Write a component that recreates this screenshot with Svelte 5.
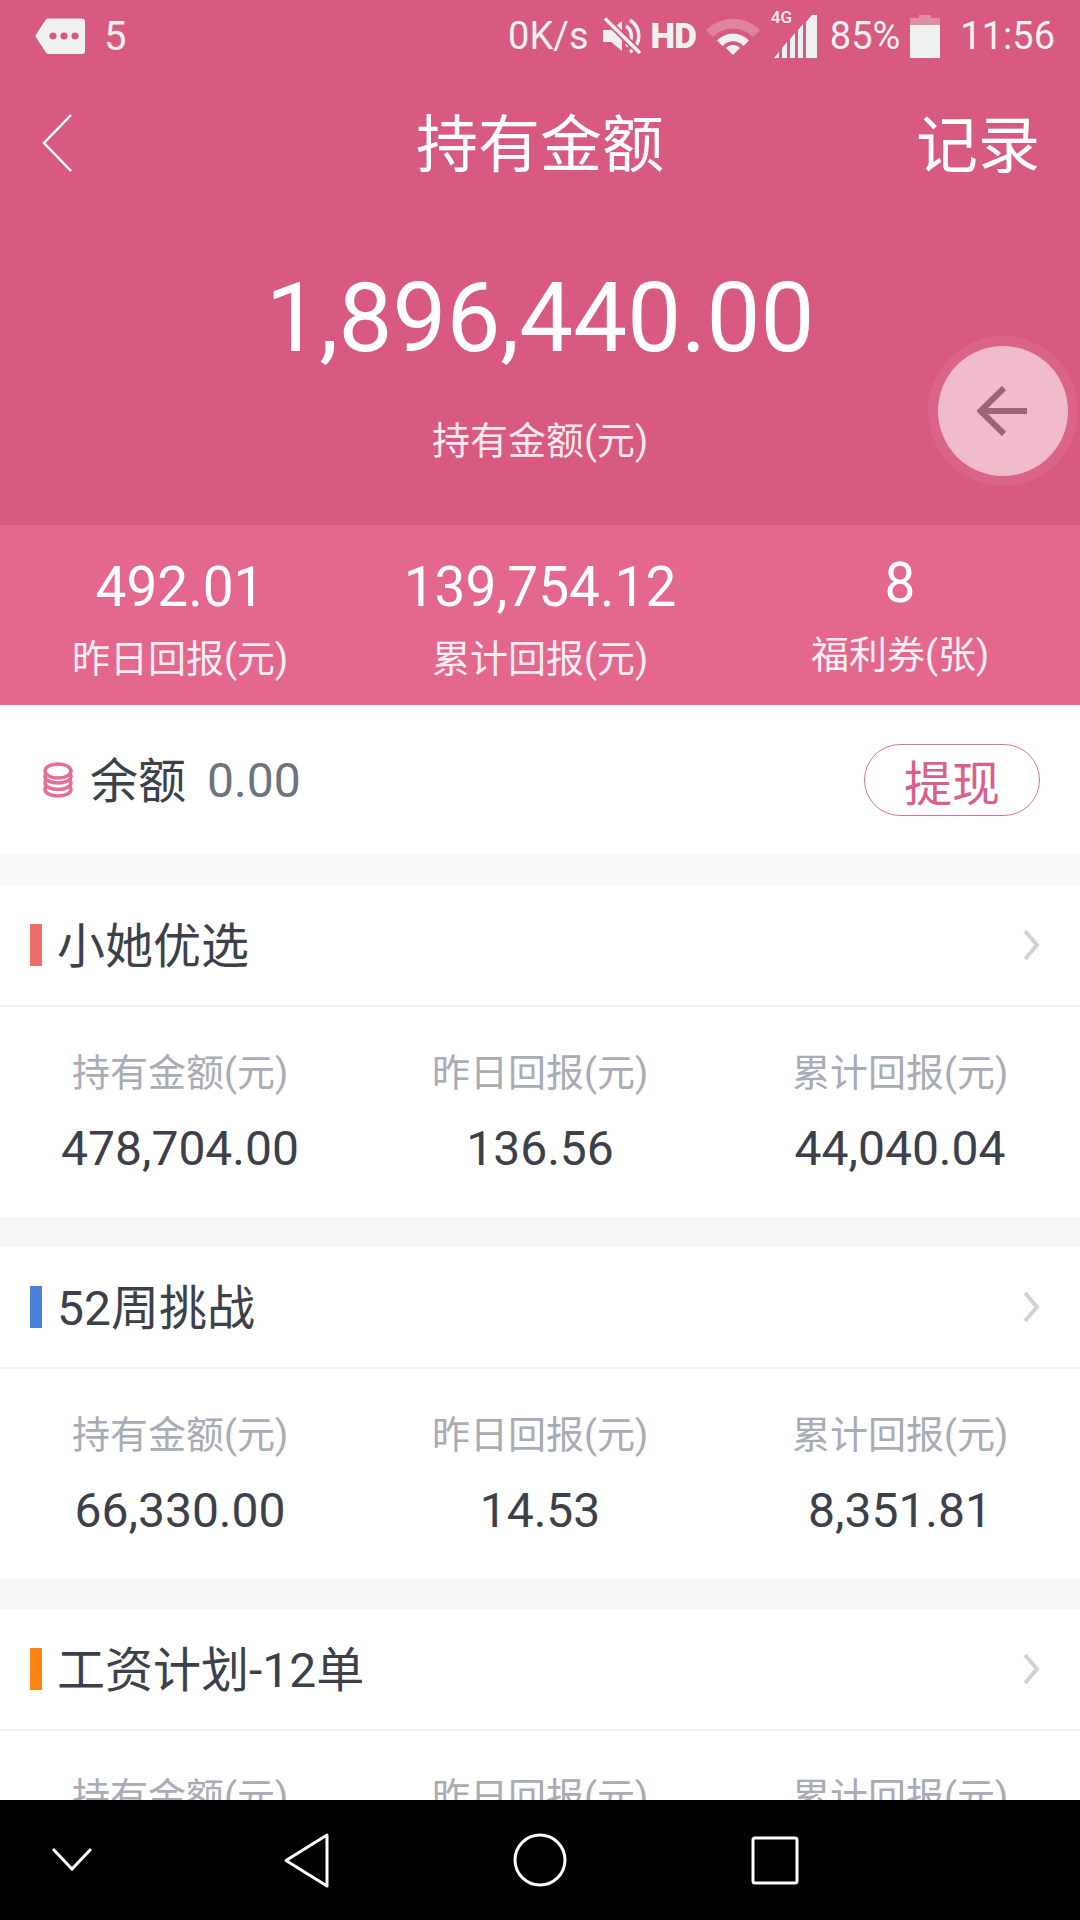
<script lang="ts">
  const summary = [
    { value: "492.01", label: "昨日回报(元)" },
    { value: "139,754.12", label: "累计回报(元)" },
    { value: "8", label: "福利券(张)", tight: true }
  ];
  const plans = [
    { name: "小她优选", color: "#ee6f6a", held: "478,704.00", yesterday: "136.56", total: "44,040.04" },
    { name: "52周挑战", color: "#4a7fdc", held: "66,330.00", yesterday: "14.53", total: "8,351.81" },
    { name: "工资计划-12单", color: "#f98314", held: "120,000.00", yesterday: "32.88", total: "10,250.00" }
  ];
</script>

<div class="screen">
  <div class="content">
    <header class="hero">
      <div class="status">
        <svg class="msg" viewBox="0 0 51 38" width="51" height="38">
          <path d="M13 1.5H47a3 3 0 0 1 3 3V34a3 3 0 0 1-3 3H13.500a3 3 0 0 1-2.400-1.200L1 20.500a2.500 2.500 0 0 1 0-3L10.600 2.700A3 3 0 0 1 13 1.500Z" fill="#eef1ee" />
          <circle cx="18" cy="19" r="3.600" fill="#d95a80" />
          <circle cx="29" cy="19" r="3.600" fill="#d95a80" />
          <circle cx="40" cy="19" r="3.600" fill="#d95a80" />
        </svg>
        <span class="count">5</span>
        <span class="spacer"></span>
        <span class="speed">0K/s</span>
        <svg class="mute" viewBox="0 0 40 38" width="40" height="38">
          <path d="M1 13H9L20 4V34L9 25H1Z" fill="#eef1ee" />
          <path d="M24 9a12 12 0 0 1 0 20M28 3a19 19 0 0 1 0 32" fill="none" stroke="#eef1ee" stroke-width="3.500" />
          <path d="M3 1.500 38 36" stroke="#d95a80" stroke-width="7" />
          <path d="M3 1.500 38 36" stroke="#eef1ee" stroke-width="3.500" />
        </svg>
        <span class="hd">HD</span>
        <svg class="wifi" viewBox="0 0 54 38" width="54" height="38">
          <path d="M0 13a38 38 0 0 1 54 0L47 20a28 28 0 0 0-40 0Z" fill="#eef1ee" opacity="0.28" />
          <path d="M11 23.500a22 22 0 0 1 32 0L37.500 29a14 14 0 0 0-21 0Z" fill="#eef1ee" />
          <path d="M20 31a9.500 9.500 0 0 1 14 0L27 38Z" fill="#eef1ee" />
        </svg>
        <span class="signal">
          <span class="net">4G</span>
          <svg viewBox="0 0 44 43" width="44" height="43">
            <path d="M0 43 5 37V43ZM8 43V33L13 27V43ZM16 43V24L21 18V43ZM24 43V15L29 9V43ZM32 43V7L38 0H43V43Z" fill="#eef1ee" />
          </svg>
        </span>
        <span class="battery-pct">85%</span>
        <svg class="battery" viewBox="0 0 30 43" width="30" height="43">
          <path d="M9 0H21V3H30V10H0V3H9Z" fill="#eef1ee" opacity="0.35" />
          <rect y="10" width="30" height="33" fill="#eef1ee" />
        </svg>
        <span class="clock">11:56</span>
      </div>

      <div class="titlebar">
        <svg class="back" viewBox="0 0 32 60" width="32" height="60">
          <path d="M30 2 3 30 30 58" fill="none" stroke="#fff" stroke-width="2.500" />
        </svg>
        <span class="title">持有金额</span>
        <span class="records">记录</span>
      </div>

      <div class="amount">1,896,440.00</div>
      <div class="amount-label">持有金额(元)</div>

      <button class="fab" aria-label="收起">
        <svg viewBox="0 0 52 50" width="52" height="50">
          <path d="M50 25H4M27 2 3.500 25 27 48" fill="none" stroke="#9e6378" stroke-width="6" />
        </svg>
      </button>
    </header>

    <section class="stats">
      {#each summary as s}
        <div class="stat" class:tight={s.tight}>
          <div class="stat-value">{s.value}</div>
          <div class="stat-label">{s.label}</div>
        </div>
      {/each}
    </section>

    <section class="balance">
      <svg class="coins" viewBox="0 0 30 36" width="30" height="36">
        <g fill="#fff" stroke="#e56f95" stroke-width="3.500">
          <ellipse cx="15" cy="27.500" rx="13" ry="6.500" />
          <ellipse cx="15" cy="21" rx="13" ry="6.500" />
          <ellipse cx="15" cy="14.500" rx="13" ry="6.500" />
          <ellipse cx="15" cy="9" rx="13" ry="7" />
        </g>
      </svg>
      <span class="balance-name">余额</span>
      <span class="balance-value">0.00</span>
      <button class="withdraw">提现</button>
    </section>

    {#each plans as p, i}
      <section class="plan" class:first={i === 0}>
        <div class="plan-head">
          <i class="plan-mark" style="background: {p.color}"></i>
          <span class="plan-name">{p.name}</span>
          <svg class="plan-arrow" viewBox="0 0 18 32" width="18" height="32">
            <path d="M3 2 15 16 3 30" fill="none" stroke="#ced3d6" stroke-width="4" />
          </svg>
        </div>
        <div class="plan-body">
          <div class="cell"><div class="cell-label">持有金额(元)</div><div class="cell-value">{p.held}</div></div>
          <div class="cell"><div class="cell-label">昨日回报(元)</div><div class="cell-value">{p.yesterday}</div></div>
          <div class="cell"><div class="cell-label">累计回报(元)</div><div class="cell-value">{p.total}</div></div>
        </div>
      </section>
    {/each}
  </div>

  <nav class="navbar">
    <svg viewBox="0 0 1080 120" width="1080" height="120">
      <g fill="none" stroke="#fff" stroke-width="3">
        <path d="M53 49 72 69 91 49" />
        <path d="M327 35V86L286 60.500Z" stroke-linejoin="round" />
        <circle cx="540" cy="60" r="25" />
        <rect x="753" y="38" width="44" height="45" rx="2" />
      </g>
    </svg>
  </nav>
</div>

<style>
  :global(body) {
    margin: 0;
    background: #f6f6f6;
    font-family: Roboto, "Noto Sans CJK SC", sans-serif;
  }
  .screen {
    width: 1080px;
    height: 1920px;
    display: flex;
    flex-direction: column;
    overflow: hidden;
  }
  .content {
    flex: 1;
    min-height: 0;
    overflow: hidden;
  }
  .navbar {
    height: 120px;
    flex-shrink: 0;
    background: #000;
  }
  .navbar svg { display: block; }

  .hero {
    position: relative;
    height: 525px;
    background: #d95a80;
    color: #fff;
    box-sizing: border-box;
  }
  .status {
    height: 68px;
    box-sizing: border-box;
    padding: 6px 25px 0 35px;
    display: flex;
    align-items: center;
    color: #eef1ee;
    border-bottom: 2px solid #d1617f;
  }
  .status svg { display: block; flex-shrink: 0; }
  .spacer { flex: 1; }
  .count { margin-left: 18px; font-size: 40px; }
  .speed { font-size: 38px; }
  .mute { margin-left: 13px; }
  .hd { margin-left: 9px; font-size: 35px; font-weight: 900; letter-spacing: -1px; }
  .wifi { margin-left: 10px; }
  .signal { position: relative; margin-left: 14px; }
  .net { position: absolute; left: -3px; top: -8px; font-size: 17px; font-weight: 500; }
  .battery-pct { margin-left: 12px; font-size: 38px; }
  .battery { margin-left: 10px; }
  .clock { margin-left: 20px; font-size: 38px; }

  .titlebar {
    height: 150px;
    display: flex;
    align-items: center;
    justify-content: center;
    position: relative;
  }
  .back { position: absolute; left: 41px; top: 45px; }
  .title { font-size: 62px; line-height: 1; margin-top: 5px; }
  .records { position: absolute; right: 40px; top: 48px; font-size: 62px; line-height: 1; }
  .amount {
    margin-top: 40px;
    text-align: center;
    font-size: 96px;
    line-height: 120px;
  }
  .amount-label {
    margin-top: 38px;
    text-align: center;
    font-size: 38px;
    line-height: 50px;
    color: #f9e9ee;
  }
  .fab {
    position: absolute;
    left: 938px;
    top: 346px;
    width: 130px;
    height: 130px;
    border: 0;
    padding: 0;
    border-radius: 50%;
    background: #f0bccb;
    box-shadow: 0 0 0 10px rgba(255, 255, 255, 0.07);
    display: flex;
    align-items: center;
    justify-content: center;
  }

  .stats {
    height: 180px;
    background: #e4688e;
    display: grid;
    grid-template-columns: repeat(3, 1fr);
    color: #fff;
    text-align: center;
  }
  .stat { padding-top: 29px; }
  .stat.tight { padding-top: 25px; }
  .stat-value { font-size: 55px; line-height: 66px; }
  .stat-label { font-size: 38px; line-height: 52px; margin-top: 13px; color: #fbeef2; }

  .balance {
    height: 150px;
    box-sizing: border-box;
    background: #fff;
    padding: 0 40px 0 43px;
    display: flex;
    align-items: center;
  }
  .balance-name { margin: 0 0 7px 17px; font-size: 48px; color: #3c404b; }
  .balance-value { margin-left: 21px; font-size: 48px; color: #6e7280; }
  .withdraw {
    margin-left: auto;
    width: 176px;
    height: 72px;
    box-sizing: border-box;
    padding: 0 0 4px;
    border: 1.500px solid #dd6f94;
    border-radius: 36px;
    background: #fff;
    color: #d9608a;
    font-family: inherit;
    font-size: 48px;
  }

  .plan { margin-top: 30px; background: #fff; }
  .plan.first { box-shadow: 0 -30px 0 #f9f9f9; }
  .plan-head {
    height: 122px;
    box-sizing: border-box;
    display: flex;
    align-items: center;
    padding: 0 40px 0 30px;
    border-bottom: 2px solid #f0f0f0;
  }
  .plan-mark { width: 12px; height: 42px; }
  .plan-name { margin: 0 0 7px 15px; font-size: 48px; color: #3c404b; }
  .plan-arrow { margin-left: auto; }
  .plan-body {
    height: 210px;
    box-sizing: border-box;
    padding-top: 40px;
    display: grid;
    grid-template-columns: repeat(3, 1fr);
    align-content: start;
    text-align: center;
  }
  .cell-label { font-size: 38px; line-height: 52px; color: #a8abb5; }
  .cell-value { margin-top: 22px; font-size: 48px; line-height: 56px; color: #3c404b; }
</style>
